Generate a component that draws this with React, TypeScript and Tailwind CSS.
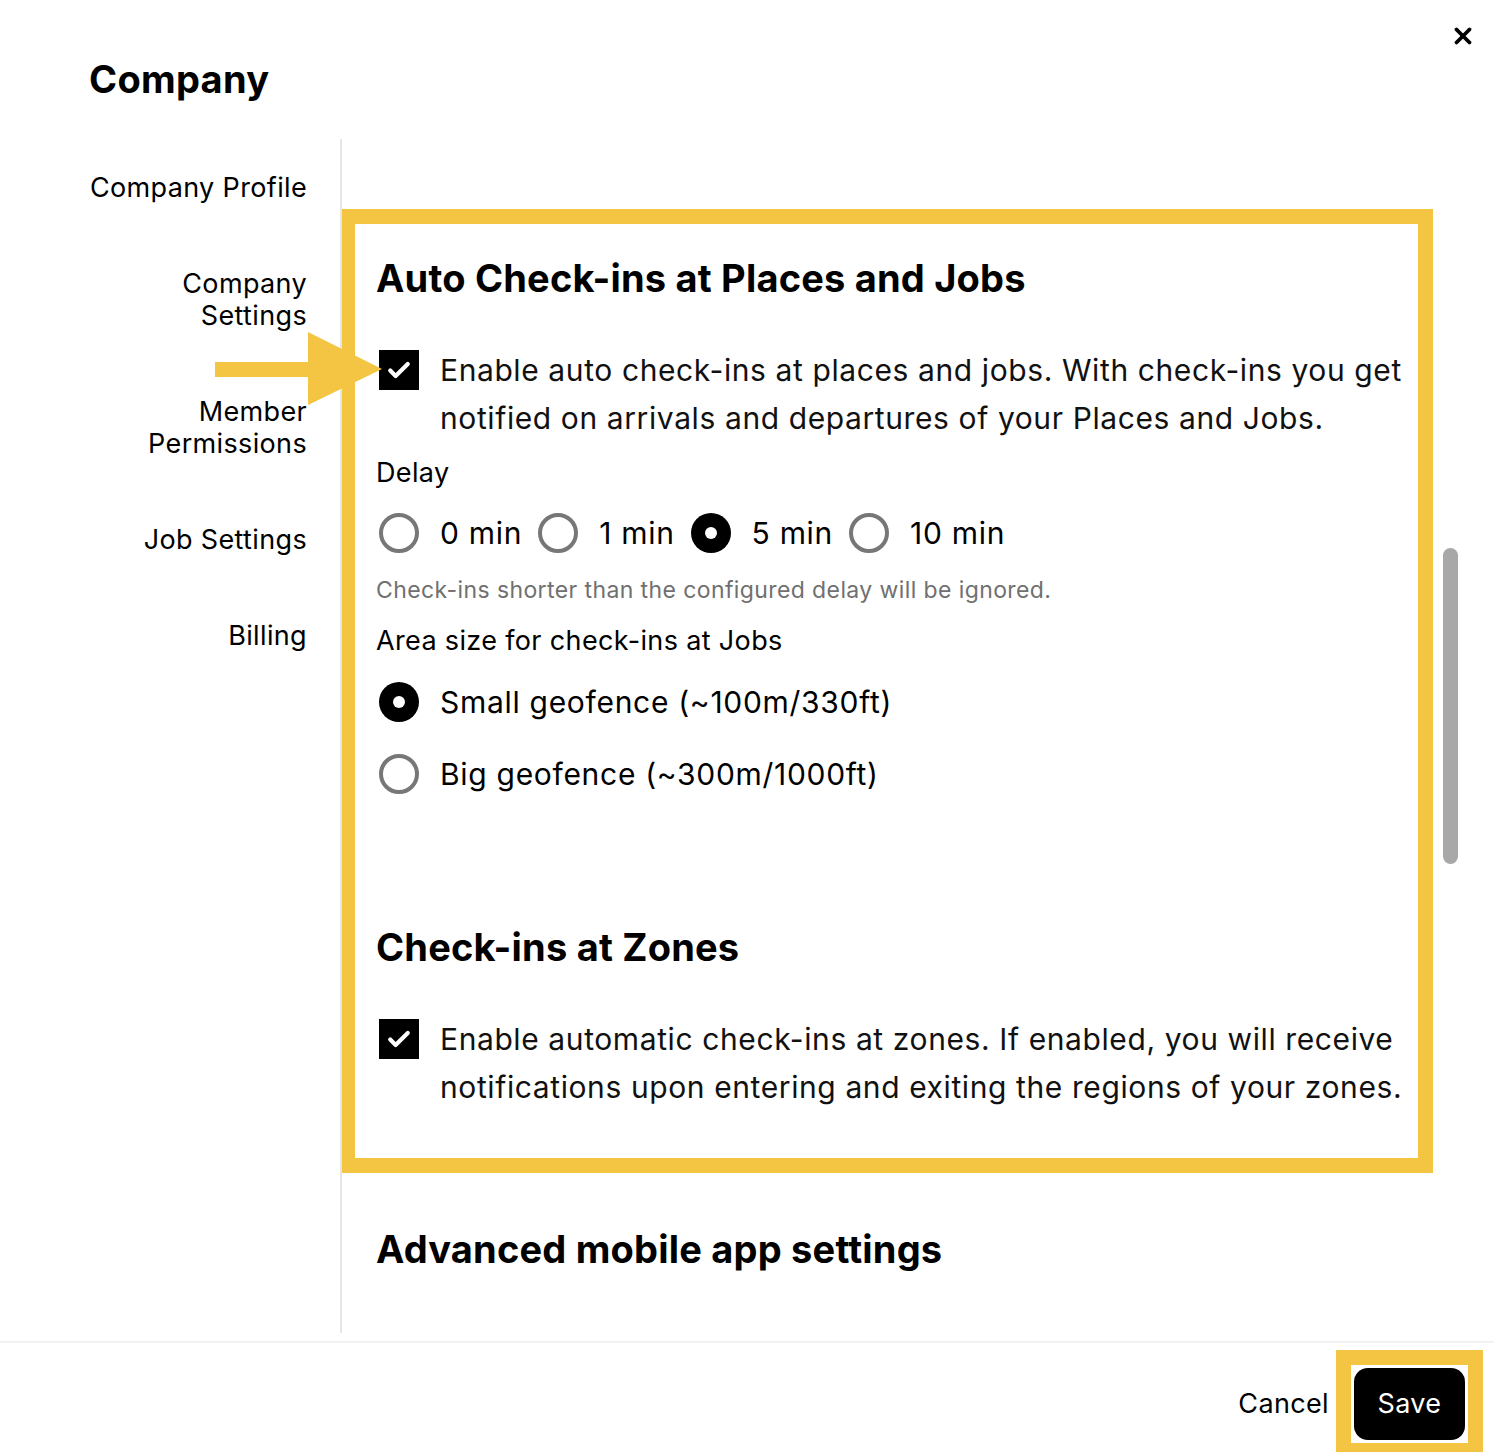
import React from 'react';
import { X } from 'lucide-react';

const navItems = [['Company Profile'], ['Company', 'Settings'], ['Member', 'Permissions'], ['Job Settings'], ['Billing']];

const Checkbox: React.FC = () => (
  <div className="ml-[3px] mt-[4px] w-10 h-10 bg-black flex items-center justify-center shrink-0">
    <svg width="28" height="28" viewBox="0 0 24 24" fill="none">
      <path d="M4.5 12.5l4.6 4.6L19.5 6.8" stroke="white" strokeWidth="3.6" strokeLinecap="round" strokeLinejoin="round" />
    </svg>
  </div>
);

const Radio: React.FC<{ checked?: boolean }> = ({ checked }) =>
  checked ? (
    <div className="w-10 h-10 rounded-full bg-black flex items-center justify-center shrink-0">
      <div className="w-3 h-3 rounded-full bg-white" />
    </div>
  ) : (
    <div className="w-10 h-10 rounded-full border-4 border-[#777777] bg-white shrink-0" />
  );

const App: React.FC = () => {
  const delays = [
    { label: '0 min', checked: false },
    { label: '1 min', checked: false },
    { label: '5 min', checked: true },
    { label: '10 min', checked: false },
  ];

  return (
    <div className="relative w-[1494px] h-[1452px] bg-white overflow-hidden flex flex-col text-black font-[Inter,'Noto_Sans',sans-serif]">
      {/* header */}
      <div className="h-[139px] shrink-0 pl-[89px] pt-[56px]">
        <h1 className="text-[38px] leading-[46px] font-bold tracking-[0.3px]">Company</h1>
      </div>
      <button className="absolute top-[23px] right-[18px] text-black">
        <X size={26} strokeWidth={3.5} />
      </button>

      {/* body */}
      <div className="flex h-[1194px] shrink-0">
        <nav className="w-[340px] shrink-0 pr-[33px] pt-[33px] flex flex-col gap-16 text-right text-[27px] leading-[32px] tracking-[0.35px]">
          {navItems.map((lines, i) => (
            <div key={i}>
              {lines.map((l) => (
                <div key={l}>{l}</div>
              ))}
            </div>
          ))}
        </nav>

        <div className="relative flex-1 border-l-2 border-[#e6e6e6] overflow-hidden pt-[70px]">
          {/* highlighted block */}
          <div className="-ml-[2px] mr-[61px] border-[15px] border-[#f4c542] pl-[21px] pr-0 pt-[31px] pb-[47px]">
            <h2 className="text-[38px] leading-[46px] font-bold tracking-[0.2px]">Auto Check-ins at Places and Jobs</h2>

            <div className="mt-[45px] flex gap-[21px]">
              <Checkbox />
              <p className="text-[30px] leading-[48px] tracking-[0.6px] text-[#111]">
                Enable auto check-ins at places and jobs. With check-ins you get notified on arrivals and departures of your Places and Jobs.
              </p>
            </div>

            <div className="mt-[15px] text-[27px] leading-[32px] tracking-[0.35px]">Delay</div>
            <div className="mt-[24px] ml-[3px] flex items-center">
              {delays.map((d) => (
                <div key={d.label} className="flex items-center gap-[21px] mr-[16px]">
                  <Radio checked={d.checked} />
                  <span className="text-[30px] leading-[40px] tracking-[0.7px]">{d.label}</span>
                </div>
              ))}
            </div>
            <p className="mt-[22px] text-[23px] leading-[30px] text-[#707070] tracking-[0.4px]">
              Check-ins shorter than the configured delay will be ignored.
            </p>

            <div className="mt-[20px] text-[27px] leading-[32px] tracking-[0.35px]">Area size for check-ins at Jobs</div>
            <div className="mt-[25px] ml-[3px] flex items-center gap-[21px]">
              <Radio checked />
              <span className="text-[30px] leading-[40px] tracking-[0.7px]">Small geofence (~100m/330ft)</span>
            </div>
            <div className="mt-[32px] ml-[3px] flex items-center gap-[21px]">
              <Radio />
              <span className="text-[30px] leading-[40px] tracking-[0.7px]">Big geofence (~300m/1000ft)</span>
            </div>

            <h2 className="mt-[130px] text-[38px] leading-[46px] font-bold tracking-[0.2px]">Check-ins at Zones</h2>
            <div className="mt-[45px] flex gap-[21px]">
              <Checkbox />
              <p className="text-[30px] leading-[48px] tracking-[0.6px] text-[#111]">
                Enable automatic check-ins at zones. If enabled, you will receive notifications upon entering and exiting the regions of your zones.
              </p>
            </div>
          </div>

          <h2 className="mt-[53px] pl-[34px] text-[38px] leading-[46px] font-bold tracking-[0.2px]">Advanced mobile app settings</h2>

          {/* scrollbar thumb */}
          <div className="absolute top-[409px] right-[36px] w-[15px] h-[316px] rounded-full bg-[#a8a8a8]" />
        </div>
      </div>

      {/* footer */}
      <div className="mt-[8px] flex-1 border-t-2 border-[#f2f2f2] flex justify-end items-start pt-[7px] pr-[11px] gap-[7px]">
        <button className="mt-[38px] text-[27px] leading-[32px] tracking-[0.35px] text-black">Cancel</button>
        <div className="border-[15px] border-[#f4c542] p-[3px] bg-white">
          <button className="w-[111px] h-[72px] rounded-[14px] bg-black text-white text-[27px] tracking-[0.35px]">Save</button>
        </div>
      </div>

      {/* arrow pointing at the first checkbox */}
      <svg className="absolute left-[215px] top-[332px]" width="170" height="74" viewBox="0 0 170 74">
        <rect x="0" y="30" width="95" height="15" fill="#f4c542" />
        <polygon points="93,0 167,37 93,73" fill="#f4c542" />
      </svg>
    </div>
  );
};

export default App;
